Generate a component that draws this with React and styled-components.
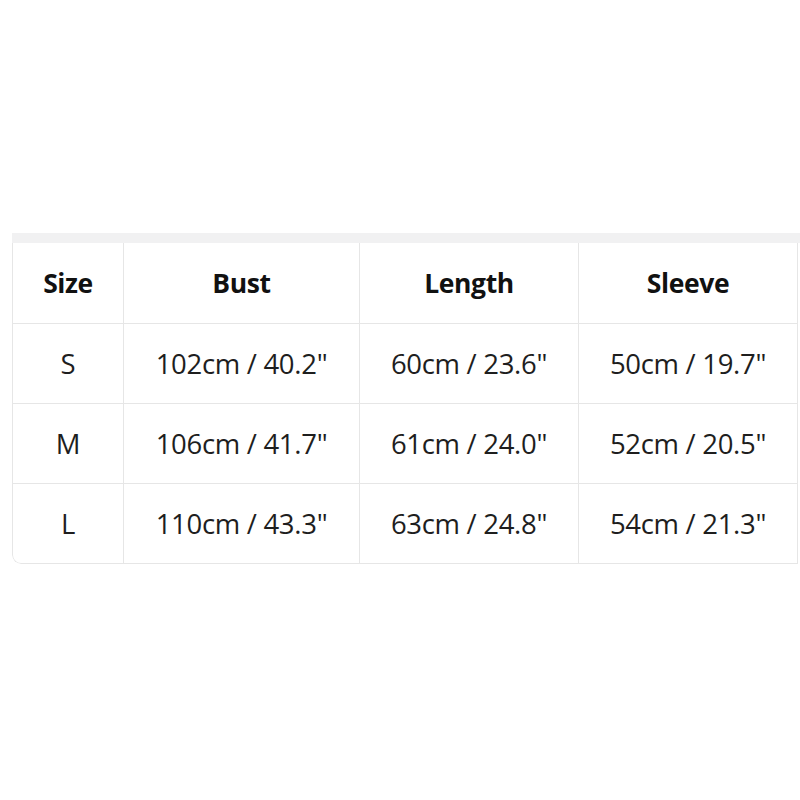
import React from 'react';
import styled, { createGlobalStyle } from 'styled-components';

const GlobalStyle = createGlobalStyle`
  html, body {
    margin: 0;
    padding: 0;
    background: #fff;
    overflow: hidden;
  }
  body {
    font-family: 'Open Sans', 'Noto Sans', sans-serif;
    color: #1f1f1f;
  }
`;

const Page = styled.div`
  width: 800px;
  height: 800px;
  padding: 233px 0 0 12px;
  box-sizing: border-box;
`;

const Card = styled.div`
  width: 788px;
  border-bottom-left-radius: 9px;
  overflow: hidden;
`;

const Band = styled.div`
  height: 10px;
  background: #f1f1f2;
`;

const Table = styled.table`
  border-collapse: separate;
  border-spacing: 0;
  table-layout: fixed;
  width: 786px;
  border-left: 1px solid #e6e6e6;
  border-bottom: 1px solid #e6e6e6;
  border-bottom-left-radius: 9px;
`;

const Cell = styled.td`
  height: ${p => (p.$head ? '80px' : '79px')};
  padding: 0;
  text-align: center;
  vertical-align: middle;
  font-size: ${p => (p.$head ? '26.5px' : '27.5px')};
  font-weight: ${p => (p.$head ? 700 : 400)};
  letter-spacing: ${p => (p.$head ? '-0.4px' : '-0.3px')};
  color: ${p => (p.$head ? '#111' : '#1e1e1e')};
  border-right: 1px solid #e6e6e6;
  border-top: ${p => (p.$first ? 'none' : '1px solid #e6e6e6')};
`;

const columns = [
  { key: 'size', label: 'Size', width: 111 },
  { key: 'bust', label: 'Bust', width: 236 },
  { key: 'length', label: 'Length', width: 219 },
  { key: 'sleeve', label: 'Sleeve', width: 219 },
];

const rows = [
  { size: 'S', bust: '102cm / 40.2"', length: '60cm / 23.6"', sleeve: '50cm / 19.7"' },
  { size: 'M', bust: '106cm / 41.7"', length: '61cm / 24.0"', sleeve: '52cm / 20.5"' },
  { size: 'L', bust: '110cm / 43.3"', length: '63cm / 24.8"', sleeve: '54cm / 21.3"' },
];

export default function App() {
  return (
    <>
      <GlobalStyle />
      <Page>
        <Card>
          <Band />
          <Table>
            <colgroup>
              {columns.map(c => (
                <col key={c.key} style={{ width: c.width }} />
              ))}
            </colgroup>
            <thead>
              <tr>
                {columns.map(c => (
                  <Cell as="th" key={c.key} $head $first>
                    {c.label}
                  </Cell>
                ))}
              </tr>
            </thead>
            <tbody>
              {rows.map(r => (
                <tr key={r.size}>
                  {columns.map(c => (
                    <Cell key={c.key}>{r[c.key]}</Cell>
                  ))}
                </tr>
              ))}
            </tbody>
          </Table>
        </Card>
      </Page>
    </>
  );
}
